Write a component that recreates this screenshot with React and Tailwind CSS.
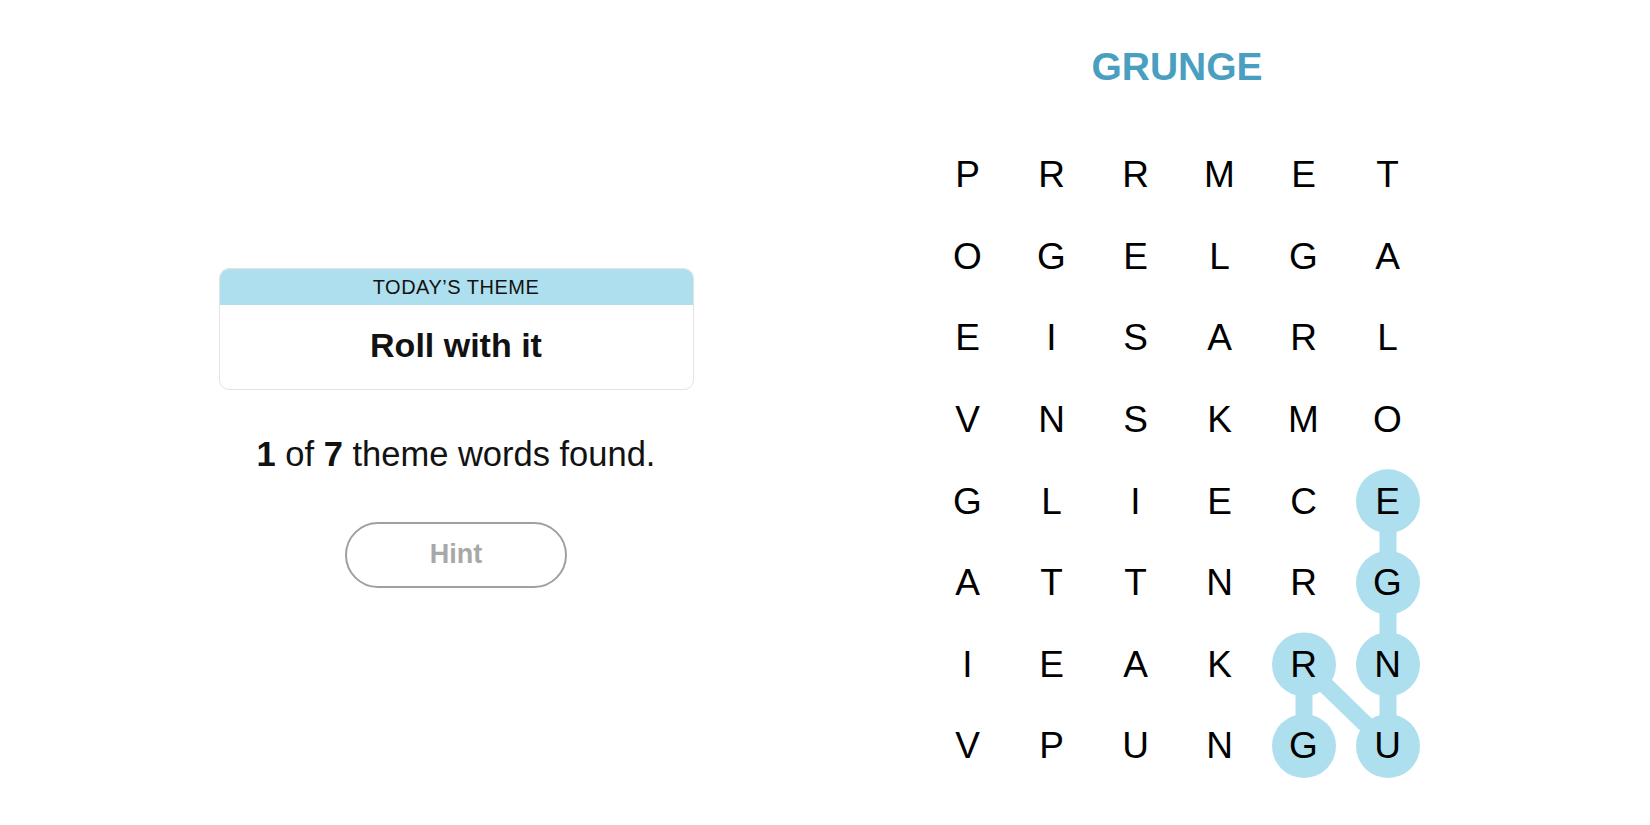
const LETRAS = [
  "PRRMET",
  "OGELGA",
  "EISARL",
  "VNSKMO",
  "GLIECE",
  "ATTNRG",
  "IEAKRN",
  "VPUNGU",
];

// palabra encontrada: GRUNGE -> [fila, columna]
const CAMINO = [
  [7, 4],
  [6, 4],
  [7, 5],
  [6, 5],
  [5, 5],
  [4, 5],
];

const CELDA_W = 84;
const CELDA_H = 81.6;

function centro([f, c]) {
  return [c * CELDA_W + CELDA_W / 2, f * CELDA_H + CELDA_H / 2];
}

function Tablero() {
  const puntos = CAMINO.map(centro);

  return (
    <div className="relative w-[504px] h-[653px]">
      <svg
        className="absolute inset-0"
        width="504"
        height="653"
        viewBox="0 0 504 653"
      >
        <polyline
          points={puntos.map((p) => p.join(",")).join(" ")}
          fill="none"
          stroke="#aedfee"
          strokeWidth="17"
          strokeLinejoin="round"
        />
        {puntos.map(([x, y], i) => (
          <circle key={i} cx={x} cy={y} r="32" fill="#aedfee" />
        ))}
      </svg>
      <div className="relative grid grid-cols-6">
        {LETRAS.map((fila, f) =>
          fila.split("").map((letra, c) => (
            <div
              key={`${f}-${c}`}
              className="w-[84px] h-[81.6px] flex items-center justify-center text-[37px] text-black leading-none"
            >
              {letra}
            </div>
          ))
        )}
      </div>
    </div>
  );
}

export default function App() {
  return (
    <div
      className="bg-white min-h-screen w-full flex text-black"
      style={{ fontFamily: '"Liberation Sans", Arial, sans-serif' }}
    >
      <section className="w-[912px] flex flex-col items-center pt-[268px]">
        <div className="w-[475px] border border-[#e3e3e3] rounded-[10px] overflow-hidden">
          <div className="bg-[#aedfee] h-[36px] flex items-center justify-center text-[20px] tracking-wide text-[#121212]">
            TODAY’S THEME
          </div>
          <div className="h-[84px] flex items-center justify-center text-[34px] font-bold text-[#121212] pb-1">
            Roll with it
          </div>
        </div>

        <p className="mt-[47px] text-[34.5px] leading-none text-[#121212]">
          <span className="font-bold">1</span> of{" "}
          <span className="font-bold">7</span> theme words found.
        </p>

        <button className="mt-[50px] w-[222px] h-[66px] rounded-full border-2 border-[#a0a0a0] text-[27px] font-bold text-[#a8a8a8]">
          Hint
        </button>
      </section>

      <section className="w-[530px] flex flex-col items-center">
        <h1 className="mt-[47px] text-[39px] font-bold text-[#4a9fc1] leading-none">
          GRUNGE
        </h1>
        <div className="mt-[48px] ml-[1px]">
          <Tablero />
        </div>
      </section>
    </div>
  );
}
